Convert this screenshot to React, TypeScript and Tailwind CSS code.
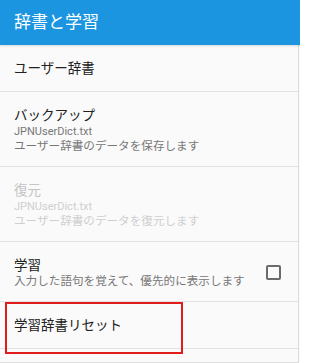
import React from 'react';

const font = { fontFamily: '"Roboto", "Noto Sans CJK JP", sans-serif' };

interface RowProps {
  title: string;
  lines?: string[];
  disabled?: boolean;
  checkbox?: boolean;
  highlight?: boolean;
}

const Row: React.FC<RowProps> = ({ title, lines = [], disabled, checkbox, highlight }) => {
  const single = lines.length === 0;
  return (
    <div
      className={`relative flex items-center border-b border-[#e2e2e2] pl-[14px] pr-[17px] ${
        single ? 'h-[47px]' : 'pt-[14px] pb-[12px]'
      }`}
    >
      <div className="flex-1">
        <div className={`text-[13.5px] leading-[18px] ${disabled ? 'text-[#c4c4c4]' : 'text-[#212121]'}`}>
          {title}
        </div>
        {lines.map((l) => (
          <div
            key={l}
            className={`leading-[15px] ${l.endsWith('.txt') ? 'text-[11px]' : 'text-[11.6px]'} ${
              disabled ? 'text-[#cfcfcf]' : 'text-[#777777]'
            }`}
          >
            {l}
          </div>
        ))}
      </div>
      {checkbox && <div className="w-[15px] h-[15px] border-2 border-[#6b6b6b] rounded-[2px]" />}
      {highlight && (
        <span className="absolute left-[5px] top-0 w-[178px] h-[52px] border-2 border-[#e01c1c]" />
      )}
    </div>
  );
};

export default function App() {
  return (
    <div className="w-[300px] h-[363px] overflow-hidden bg-[#fafafa]" style={font}>
      <header className="h-[45px] bg-[#1b95e0] flex items-center pl-[14px] shadow-[0_1px_2px_rgba(0,0,0,0.15)] relative z-10">
        <h1 className="text-[17px] text-white leading-none">辞書と学習</h1>
      </header>
      <div className="w-[299px] h-[318px] border-r border-b border-[#dddddd]">
        <Row title="ユーザー辞書" />
        <Row title="バックアップ" lines={['JPNUserDict.txt', 'ユーザー辞書のデータを保存します']} />
        <Row title="復元" lines={['JPNUserDict.txt', 'ユーザー辞書のデータを復元します']} disabled />
        <Row title="学習" lines={['入力した語句を覚えて、優先的に表示します']} checkbox />
        <Row title="学習辞書リセット" highlight />
      </div>
    </div>
  );
}
